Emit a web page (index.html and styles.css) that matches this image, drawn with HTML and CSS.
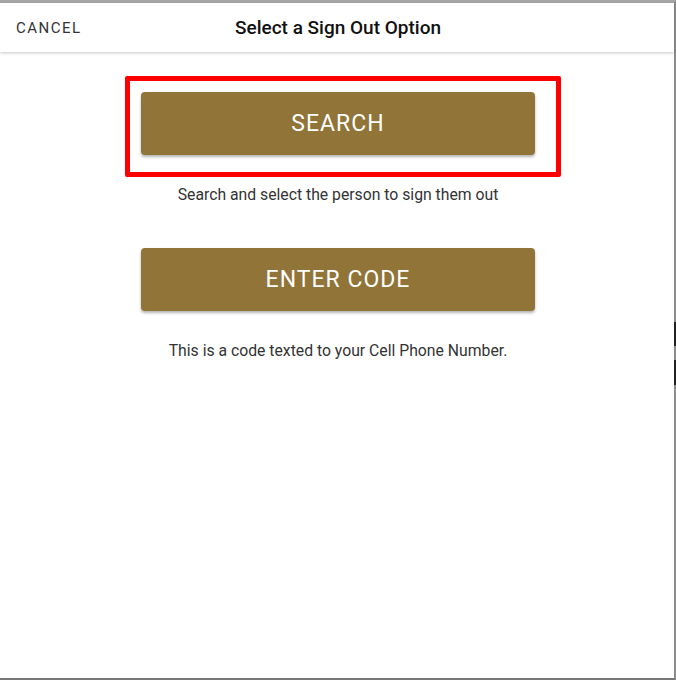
FILE: index.html
```html
<!DOCTYPE html>
<html>
<head>
<meta charset="utf-8">
<link rel="stylesheet" href="styles.css">
</head>
<body>
<div class="frame">
  <header class="topbar">
    <span class="cancel">CANCEL</span>
    <h1 class="title">Select a Sign Out Option</h1>
  </header>
  <main class="content">
    <div class="option">
      <button class="btn">SEARCH</button>
      <p class="hint">Search and select the person to sign them out</p>
    </div>
    <div class="option">
      <button class="btn">ENTER CODE</button>
      <p class="hint">This is a code texted to your Cell Phone Number.</p>
    </div>
  </main>
  <div class="highlight"></div>
  <div class="edge-mark mark1"></div>
  <div class="edge-mark mark2"></div>
</div>
</body>
</html>
```
FILE: styles.css
```css
html, body {
  margin: 0;
  padding: 0;
  background: #ffffff;
}
body {
  font-family: Roboto, "Liberation Sans", Arial, sans-serif;
  width: 676px;
  height: 680px;
  overflow: hidden;
}
.frame {
  position: relative;
  box-sizing: border-box;
  width: 676px;
  height: 680px;
  border-top: 3px solid #a6a6a6;
  border-right: 2px solid #8c8c8c;
  border-bottom: 2px solid #777777;
  background: #fff;
}
.topbar {
  position: relative;
  height: 49px;
  display: flex;
  align-items: center;
  justify-content: center;
  background: #fff;
  box-shadow: 0 1px 3px rgba(0,0,0,0.22);
}
.cancel {
  position: absolute;
  left: 16px;
  top: 16px;
  font-size: 15px;
  letter-spacing: 1.5px;
  color: #333;
}
.title {
  margin: 0;
  font-size: 19px;
  font-weight: 500;
  color: #111;
  transform: translateX(1px);
}
.content {
  display: flex;
  flex-direction: column;
  align-items: center;
  padding-top: 40px;
  padding-left: 2px;
}
.option {
  display: flex;
  flex-direction: column;
  align-items: center;
  margin-bottom: 44px;
}
.btn {
  width: 394px;
  height: 63px;
  border: none;
  border-radius: 4px;
  background: #917437;
  color: #fff;
  font-family: Roboto, "Liberation Sans", Arial, sans-serif;
  font-size: 23px;
  letter-spacing: 1px;
  box-shadow: 0 2px 3px rgba(0,0,0,0.3);
  padding: 0;
}
.hint {
  margin: 31px 0 0 0;
  font-size: 15.75px;
  line-height: 18px;
  color: #333;
}
.highlight {
  position: absolute;
  left: 125px;
  top: 73px;
  width: 436px;
  height: 101px;
  box-sizing: border-box;
  border: 5px solid #ff0000;
  border-radius: 2px;
}
.edge-mark {
  position: absolute;
  right: -2px;
  width: 2px;
  background: #222;
}
.mark1 { top: 319px; height: 24px; }
.mark2 { top: 357px; height: 25px; }
```
